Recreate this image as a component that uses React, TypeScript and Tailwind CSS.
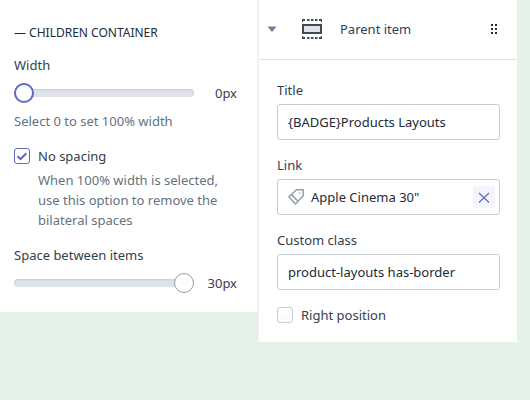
import { useState } from "react";
import type { ReactNode } from "react";

const rangeClass =
  "block h-5 min-w-0 flex-1 cursor-pointer appearance-none bg-transparent [&::-webkit-slider-runnable-track]:h-2 [&::-webkit-slider-runnable-track]:rounded-full [&::-webkit-slider-runnable-track]:bg-[#dfe3e8] [&::-webkit-slider-runnable-track]:shadow-[inset_0_1px_2px_#c4cdd5] [&::-webkit-slider-thumb]:-mt-1.5 [&::-webkit-slider-thumb]:size-5 [&::-webkit-slider-thumb]:appearance-none [&::-webkit-slider-thumb]:rounded-full [&::-webkit-slider-thumb]:bg-white [&::-webkit-slider-thumb]:border-solid";

function Slider({ id, label, initial, max, active }: { id: string; label: string; initial: number; max: number; active?: boolean }) {
  const [value, setValue] = useState(initial);
  const thumb = active
    ? "[&::-webkit-slider-thumb]:border-2 [&::-webkit-slider-thumb]:border-[#5c6ac4]"
    : "[&::-webkit-slider-thumb]:border [&::-webkit-slider-thumb]:border-[#919eab]";
  return (
    <div>
      <label htmlFor={id} className="block">{label}</label>
      <div className="mt-2 flex items-center">
        <input
          id={id}
          type="range"
          min={0}
          max={max}
          value={value}
          onChange={(e) => setValue(Number(e.target.value))}
          className={`${rangeClass} ${thumb}`}
        />
        <output htmlFor={id} className="w-[43px] text-right">{value}px</output>
      </div>
    </div>
  );
}

function Checkbox({ id, label, initial }: { id: string; label: string; initial: boolean }) {
  const [checked, setChecked] = useState(initial);
  return (
    <div className="flex items-center gap-2">
      <span className="relative size-4">
        <input
          id={id}
          type="checkbox"
          checked={checked}
          onChange={(e) => setChecked(e.target.checked)}
          className="block size-4 appearance-none rounded-[3px] border border-[#c4cdd5] bg-linear-to-b from-white to-[#f9fafb] checked:border-[#5c6ac4] checked:from-white checked:to-white"
        />
        {checked && (
          <svg viewBox="0 0 16 16" className="pointer-events-none absolute inset-0 size-4" fill="none" stroke="#5c6ac4" strokeWidth="2">
            <path d="M3.5 8.2 6.6 11 12.3 5.3" />
          </svg>
        )}
      </span>
      <label htmlFor={id}>{label}</label>
    </div>
  );
}

function Field({ id, label, value, icon, action }: { id: string; label: string; value: string; icon?: ReactNode; action?: ReactNode }) {
  return (
    <div>
      <label htmlFor={id} className="block">{label}</label>
      <div className="mt-1 flex h-9 items-center rounded-[3px] border border-[#c4cdd5] pr-1 pl-2.5">
        {icon}
        <input id={id} defaultValue={value} className="min-w-0 flex-1 bg-transparent text-[#212b36] outline-none" />
        {action}
      </div>
    </div>
  );
}

export default function App() {
  return (
    <div className="min-h-screen bg-[#e5f2ea] pr-[13px] font-['Noto_Sans',sans-serif] text-[13px] leading-5 text-[#33404d]">
      <main className="grid grid-cols-[minmax(0,258fr)_minmax(0,259fr)] items-start">
        <section className="border-r border-[#f1f1f1] bg-white pt-[23px] pr-5 pb-[19px] pl-3.5">
          <h2 className="text-[12px] leading-5 text-[#212b36]">— CHILDREN CONTAINER</h2>
          <div className="mt-3">
            <Slider id="width" label="Width" initial={0} max={100} active />
          </div>
          <p className="mt-2 text-[#637381]">Select 0 to set 100% width</p>
          <div className="mt-[15px]">
            <Checkbox id="spacing" label="No spacing" initial />
            <p className="mt-1 pl-6 whitespace-nowrap text-[#637381]">
              When 100% width is selected,
              <br />
              use this option to remove the
              <br />
              bilateral spaces
            </p>
          </div>
          <div className="mt-[15px]">
            <Slider id="space" label="Space between items" initial={30} max={30} />
          </div>
        </section>

        <section className="border-l border-[#f1f1f1] bg-white">
          <header className="flex h-15 items-center border-b border-[#dfe3e8] pr-5 pb-px pl-2">
            <button type="button" aria-label="Collapse item" className="w-2.5">
              <svg viewBox="0 0 10 6" className="h-1.5 w-2.5" fill="#71849a">
                <path d="M0.5 0.5h9L5.8 5.2q-.8.9-1.6 0z" />
              </svg>
            </button>
            <svg viewBox="0 0 20 20" className="ml-[25px] size-5" fill="none" stroke="#3f4b59" strokeWidth="2">
              <rect x="1" y="6" width="18" height="8" fill="#dfe3e8" />
              <path d="M0 1h3M5 1h2.500M9 1h2.500M13 1h2.500M17 1h3M0 19h3M5 19h2.500M9 19h2.500M13 19h2.500M17 19h3" />
              <path d="M.5 0v3M19.500 0v3M.5 17v3M19.500 17v3" strokeWidth="1" />
            </svg>
            <h2 className="ml-[18px] flex-1">Parent item</h2>
            <button type="button" aria-label="Move item" className="w-1.5">
              <svg viewBox="0 0 6 10" className="h-2.5 w-1.5" fill="#212b36">
                <path d="M0 0h2v2H0zM4 0h2v2H4zM0 4h2v2H0zM4 4h2v2H4zM0 8h2v2H0zM4 8h2v2H4z" />
              </svg>
            </button>
          </header>
          <div className="flex flex-col gap-[15px] pt-5 pr-[17px] pb-[17px] pl-[18px]">
            <Field id="title" label="Title" value="{BADGE}Products Layouts" />
            <Field
              id="link"
              label="Link"
              value={'Apple Cinema 30"'}
              icon={
                <svg viewBox="0 0 16 16" className="mr-[7px] size-4 shrink-0" fill="none" stroke="#919eab" strokeWidth="1.500" strokeLinejoin="round">
                  <path d="M8.500 .8h6.700v6L7.500 14.900.9 7.800z" />
                  <path d="M3.500 5.600 10 12.200" />
                  <circle cx="11.800" cy="4" r="0.300" strokeWidth="1" />
                </svg>
              }
              action={
                <button type="button" aria-label="Remove link" className="grid size-[22px] place-items-center rounded-[3px] bg-[#f4f5fa]">
                  <svg viewBox="0 0 12 12" className="size-3" fill="none" stroke="#5c6ac4" strokeWidth="1.200">
                    <path d="m1 2 10 9.500M11 2 1 11.500" />
                  </svg>
                </button>
              }
            />
            <Field id="class" label="Custom class" value="product-layouts has-border" />
            <Checkbox id="right" label="Right position" initial={false} />
          </div>
        </section>
      </main>
    </div>
  );
}
